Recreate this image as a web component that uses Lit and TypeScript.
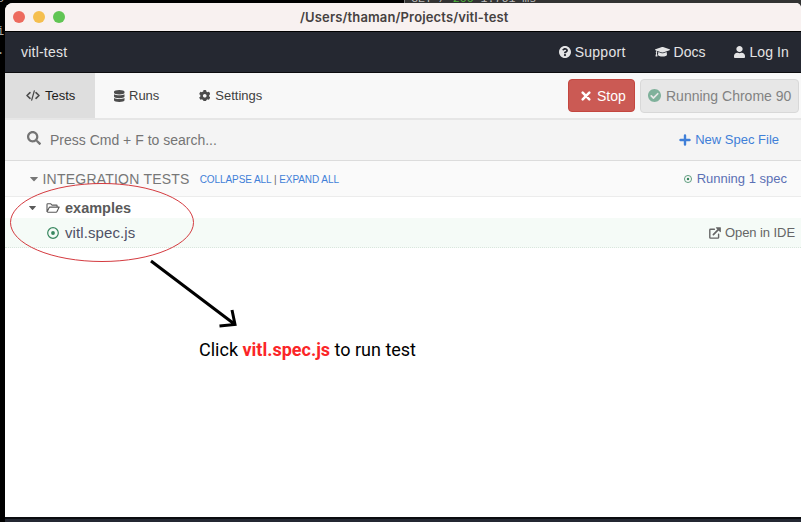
import { LitElement, html, svg, css } from "lit";
import { customElement } from "lit/decorators.js";

const glyphs: Record<string, { box: string; body: unknown }> = {
  help: {
    box: "8 8 496 496",
    body: svg`<path fill-rule="evenodd" d="M504 256c0 136.997-111.043 248-248 248S8 392.997 8 256C8 119.083 119.043 8 256 8s248 111.083 248 248zM262.655 90c-54.497 0-89.255 22.957-116.549 63.758-3.536 5.286-2.353 12.415 2.715 16.258l34.699 26.31c5.205 3.947 12.621 3.008 16.665-2.122 17.864-22.658 30.113-35.797 57.303-35.797 20.429 0 45.698 13.148 45.698 32.958 0 14.976-12.363 22.667-32.534 33.976C247.128 238.528 216 254.941 216 296v4c0 6.627 5.373 12 12 12h56c6.627 0 12-5.373 12-12v-1.333c0-28.462 83.186-29.647 83.186-106.667 0-58.002-60.165-102-116.531-102zM256 338c-25.365 0-46 20.635-46 46 0 25.364 20.635 46 46 46s46-20.636 46-46c0-25.365-20.635-46-46-46z"/>`,
  },
  cap: {
    box: "0 64 640 384",
    body: svg`<path d="M622.34 153.2L343.4 67.5c-15.2-4.67-31.6-4.67-46.79 0L17.66 153.2c-23.54 7.23-23.54 38.36 0 45.59l48.63 14.94c-10.67 13.19-17.23 29.28-17.88 46.9C38.78 266.15 32 276.11 32 288c0 10.78 5.68 19.85 13.86 25.65L20.33 428.53C18.11 438.52 25.71 448 35.94 448h56.11c10.24 0 17.84-9.48 15.62-19.47L82.14 313.65C90.32 307.85 96 298.78 96 288c0-11.57-6.47-21.25-15.66-26.87.76-15.02 8.44-28.3 20.69-36.72L296.6 284.5c9.06 2.78 26.44 6.25 46.79 0l278.95-85.7c23.55-7.24 23.55-38.36 0-45.6zM352.79 315.09c-28.53 8.76-52.84 3.92-65.59 0l-145.02-44.55L128 384c0 35.35 85.96 64 192 64s192-28.65 192-64l-14.18-113.47-145.03 44.56z"/>`,
  },
  user: {
    box: "0 0 448 512",
    body: svg`<path d="M224 256c70.7 0 128-57.3 128-128S294.7 0 224 0 96 57.3 96 128s57.3 128 128 128zm89.6 32h-16.7c-22.2 10.2-46.9 16-72.9 16s-50.6-5.8-72.9-16h-16.7C60.2 288 0 348.2 0 422.4V464c0 26.5 21.5 48 48 48h352c26.5 0 48-21.5 48-48v-41.6c0-74.2-60.2-134.4-134.4-134.4z"/>`,
  },
  code: {
    box: "0 0 14 11",
    body: svg`<path fill="none" stroke="currentColor" stroke-width="1.6" stroke-linecap="round" stroke-linejoin="round" d="M4 2.7L1 5.5l3 2.8M10 2.7l3 2.8-3 2.8"/><path fill="none" stroke="currentColor" stroke-width="1.3" stroke-linecap="round" d="M8.3 .8L5.7 10.2"/>`,
  },
  database: {
    box: "0 0 448 512",
    body: svg`<path d="M448 73.143v45.714C448 159.143 347.667 192 224 192S0 159.143 0 118.857V73.143C0 32.857 100.333 0 224 0s224 32.857 224 73.143zM448 176v102.857C448 319.143 347.667 352 224 352S0 319.143 0 278.857V176c48.125 33.143 136.208 48.572 224 48.572S399.874 209.143 448 176zm0 160v102.857C448 479.143 347.667 512 224 512S0 479.143 0 438.857V336c48.125 33.143 136.208 48.572 224 48.572S399.874 369.143 448 336z"/>`,
  },
  cog: {
    box: "8 8 496 496",
    body: svg`<path fill-rule="evenodd" d="M487.4 315.7l-42.6-24.6c4.3-23.2 4.3-47 0-70.2l42.6-24.6c4.9-2.8 7.1-8.6 5.5-14-11.1-35.6-30-67.8-54.7-94.6-3.8-4.1-10-5.1-14.8-2.3L380.8 110c-17.9-15.4-38.5-27.3-60.8-35.1V25.8c0-5.6-3.9-10.5-9.4-11.7-36.7-8.2-74.3-7.8-109.2 0-5.5 1.2-9.4 6.1-9.4 11.7V75c-22.2 7.9-42.8 19.8-60.8 35.1L88.7 85.5c-4.9-2.8-11-1.9-14.8 2.3-24.7 26.7-43.6 58.9-54.7 94.6-1.7 5.4.6 11.2 5.5 14L67.3 221c-4.3 23.2-4.3 47 0 70.2l-42.6 24.6c-4.9 2.8-7.1 8.6-5.5 14 11.1 35.6 30 67.8 54.7 94.6 3.8 4.1 10 5.1 14.8 2.3l42.6-24.6c17.9 15.4 38.5 27.3 60.8 35.1v49.2c0 5.6 3.9 10.5 9.4 11.7 36.7 8.2 74.3 7.8 109.2 0 5.5-1.2 9.4-6.1 9.4-11.7v-49.2c22.2-7.9 42.8-19.8 60.8-35.1l42.6 24.6c4.9 2.8 11 1.9 14.8-2.3 24.7-26.7 43.6-58.9 54.7-94.6 1.5-5.5-.7-11.3-5.6-14.1zM256 336c-44.1 0-80-35.9-80-80s35.9-80 80-80 80 35.9 80 80-35.9 80-80 80z"/>`,
  },
  cross: {
    box: "0 0 10 10",
    body: svg`<path fill="none" stroke="currentColor" stroke-width="2.5" stroke-linecap="round" d="M1.7 1.7l6.6 6.6M8.3 1.7L1.7 8.3"/>`,
  },
  check: {
    box: "8 8 496 496",
    body: svg`<path fill-rule="evenodd" d="M504 256c0 136.967-111.033 248-248 248S8 392.967 8 256 119.033 8 256 8s248 111.033 248 248zM227.314 387.314l184-184c6.248-6.248 6.248-16.379 0-22.627l-22.627-22.627c-6.248-6.249-16.379-6.249-22.628 0L216 308.118l-70.059-70.059c-6.248-6.248-16.379-6.248-22.628 0l-22.627 22.627c-6.248 6.248-6.248 16.379 0 22.627l104 104c6.249 6.249 16.379 6.249 22.628.001z"/>`,
  },
  search: {
    box: "0 0 512 512",
    body: svg`<path fill-rule="evenodd" d="M505 442.7L405.3 343c-4.5-4.5-10.6-7-17-7H372c27.6-35.3 44-79.7 44-128C416 93.1 322.9 0 208 0S0 93.1 0 208s93.1 208 208 208c48.3 0 92.7-16.4 128-44v16.3c0 6.4 2.5 12.5 7 17l99.7 99.7c9.4 9.4 24.6 9.4 33.9 0l28.3-28.3c9.4-9.4 9.4-24.6.1-34zM208 336c-70.7 0-128-57.2-128-128 0-70.7 57.2-128 128-128 70.7 0 128 57.2 128 128 0 70.7-57.2 128-128 128z"/>`,
  },
  plus: {
    box: "0 0 12 12",
    body: svg`<path fill="none" stroke="currentColor" stroke-width="2.4" stroke-linecap="round" d="M6 1.5v9M1.5 6h9"/>`,
  },
  dot: {
    box: "0 0 12 12",
    body: svg`<circle cx="6" cy="6" r="5.3" fill="none" stroke="currentColor" stroke-width="1.2"/><circle cx="6" cy="6" r="1.9"/>`,
  },
  caret: {
    box: "0 0 8 4.4",
    body: svg`<path d="M.5 0h7q.7.1.3.6L4.5 4.1q-.5.4-1 0L.2.6Q-.2.1.5 0z"/>`,
  },
  folder: {
    box: "0 0 14 10",
    body: svg`<path fill="none" stroke="currentColor" stroke-width="1.1" stroke-linejoin="round" d="M1 9V1.4Q1 .7 1.7.7H4.6L6 2.1h4.4q.7 0 .7.7v1.3M1 9L3.1 4.7q.3-.6.9-.6h9.2L11 8.6q-.3.6-.9.6H1.3"/>`,
  },
  external: {
    box: "0 0 12 12",
    body: svg`<path fill="none" stroke="currentColor" stroke-width="1.4" stroke-linecap="round" stroke-linejoin="round" d="M5.4 2.3H1.5q-.7 0-.7.7v7.4q0 .7.7.7h7.4q.7 0 .7-.7V7.3"/><path fill="none" stroke="currentColor" stroke-width="1.7" stroke-linecap="round" d="M4.4 7.6L9.8 2.2"/><path d="M7.3.2h4q.6 0 .6.6v4q-.2.7-.8.3L7 1.1Q6.6.4 7.3.2z"/>`,
  },
};

const icon = (name: string, w: number, h: number) => html`<svg
  class="icon" width=${w} height=${h} viewBox=${glyphs[name].box}
  preserveAspectRatio="none" fill="currentColor">${glyphs[name].body}</svg>`;

@customElement("app-root")
export class AppRoot extends LitElement {
  static styles = css`
    * { box-sizing: border-box; }
    :host {
      display: block; position: relative; width: 801px; height: 522px; overflow: hidden;
      background: #000; color: #525252; white-space: nowrap;
      font: 13px/20px "Liberation Sans", Arial, sans-serif;
    }
    .icon { display: block; flex: none; }
    .row, .item { display: flex; align-items: center; }
    .push { margin-left: auto; }
    .terminal {
      position: absolute; left: 404px; top: 0; right: 0; height: 12px; overflow: hidden;
      background: #333; border-left: 1px solid #777; padding-left: 6px;
      font: 11.6px/14px "Liberation Mono", monospace; color: #bbb;
    }
    .terminal p { margin: -8px 0 0; }
    .terminal b { color: #4fb53c; font-weight: normal; }
    .edge { position: absolute; left: -3px; font: 12px/14px "Liberation Mono", monospace; color: #aaa; }
    .e1 { top: -8px; } .e2 { top: 25px; } .e3 { top: 44px; }
    .window {
      position: relative; margin: 3px 0 0 5px; width: 796px; height: 514px;
      background: #fff; border-radius: 8px 5px 0 0; overflow: hidden;
      display: flex; flex-direction: column;
    }
    .titlebar { height: 28px; flex: none; background: #f8f1f0; padding-left: 8px; gap: 8px; }
    .light { width: 12px; height: 12px; border-radius: 50%; flex: none; }
    .red { background: #ed6a5e; } .yellow { background: #f5bf4f; } .green { background: #61c554; }
    .title { margin: -1px 0 0 227px; font: 600 13px/20px Inter, sans-serif; letter-spacing: .14px; color: #464141; }
    .nav {
      height: 42px; flex: none; background: #252831; color: #e4e4e5; font-size: 14px;
      border-top: 1px solid #000; border-bottom: 1px solid #0c0d10; padding: 0 12px 0 16px;
    }
    .nav .item { gap: 4px; }
    .project { letter-spacing: .22px; }
    .support { letter-spacing: .27px; }
    .docs { margin-left: 29px; } .login { margin-left: 29px; letter-spacing: .1px; }
    .tabs { height: 47px; flex: none; background: #f8f8f8; border-bottom: 2px solid #e6e6e6; padding-right: 2px; }
    .tab { height: 45px; color: #3f3f3f; gap: 5px; }
    .tests { width: 90px; background: #dedede; padding-left: 21px; color: #1d1d1d; }
    .tests .icon, .runs .icon, .settings .icon { color: #4c4c4c; }
    .runs { margin-left: 19px; gap: 4.5px; } .settings { margin-left: 39.5px; }
    .btn { height: 34px; border: 1px solid; border-radius: 4px; font-size: 14px; }
    .stop { width: 67px; height: 33px; background: #cb5a54; border-color: #c4463f; color: #fff; padding-left: 12px; gap: 6px; }
    .browser { width: 159px; margin-left: 5px; padding-left: 7px; gap: 5px; background: #e7e7e7; border-color: #d8d8d8; color: #828282; }
    .mint { color: #7fb19b; }
    .find { height: 41px; flex: none; background: #f4f4f4; border-bottom: 1px solid #dcdcdc; padding: 0 22px 1px; color: #747474; font-size: 14px; }
    .find > .icon { margin-top: -3px; }
    .find .hint { margin-left: 9px; }
    .link { color: #3f7fd8; font-size: 13px; gap: 4px; }
    .group { height: 36px; flex: none; background: #fafafa; border-bottom: 1px solid #ececec; padding: 0 14px 0 25px; color: #777; }
    .group > .icon { margin-top: 2px; }
    .group .name { margin-left: 4.5px; font-size: 14px; letter-spacing: .22px; }
    .toggles { margin: 2px 0 0 10px; font-size: 10px; letter-spacing: -.07px; color: #666; }
    .toggles a { color: #3f7fd8; }
    .running { color: #5b70b5; gap: 4.5px; }
    .leaf { color: #38875f; }
    .dir { height: 21px; flex: none; padding-left: 24px; color: #5a5a5a; }
    .dir .fold { margin-left: 9.500px; width: 14px; }
    .dir .name { margin-left: 5.5px; font-size: 14.5px; font-weight: 600; }
    .spec { height: 30px; flex: none; background: #f5fbf7; border-bottom: 1px dotted #d9e6dd; padding: 0 6px 0 41.5px; color: #4f5165; }
    .spec .name { margin-left: 6.5px; font-size: 15px; letter-spacing: .1px; }
    .open { color: #666; gap: 4px; letter-spacing: -.07px; }
    .footer { height: 5px; background: #242832; border-top: 2px solid #0b0c10; margin-left: 5px; }
    .marks { position: absolute; left: 0; top: 0; }
    .caption { position: absolute; left: 199px; top: 338px; font: 18px/24px Roboto, sans-serif; color: #000; }
    .caption b { color: #fb2527; font-weight: 700; }
  `;

  render() {
    return html`
      <div class="terminal"><p>GET / <b>200</b> 1.761 ms</p></div>
      <span class="edge e1">o</span><span class="edge e2">i</span><span class="edge e3">.</span>
      <main class="window">
        <header class="titlebar row">
          <i class="light red"></i><i class="light yellow"></i><i class="light green"></i>
          <span class="title">/Users/thaman/Projects/vitl-test</span>
        </header>
        <nav class="nav row">
          <span class="project">vitl-test</span>
          <span class="item support push">${icon("help", 12, 12)}<span>Support</span></span>
          <span class="item docs">${icon("cap", 15, 9.5)}<span>Docs</span></span>
          <span class="item login">${icon("user", 11, 12)}<span>Log In</span></span>
        </nav>
        <div class="tabs row">
          <span class="item tab tests">${icon("code", 14, 11)}<span>Tests</span></span>
          <span class="item tab runs">${icon("database", 10.5, 12)}<span>Runs</span></span>
          <span class="item tab settings">${icon("cog", 11.5, 11.5)}<span>Settings</span></span>
          <span class="item btn stop push">${icon("cross", 10, 10)}<span>Stop</span></span>
          <span class="item btn browser"><span class="mint">${icon("check", 13, 13)}</span><span>Running Chrome 90</span></span>
        </div>
        <div class="find row">
          ${icon("search", 14, 14)}<span class="hint">Press Cmd + F to search...</span>
          <span class="item link push">${icon("plus", 12, 12)}<span>New Spec File</span></span>
        </div>
        <div class="group row">
          ${icon("caret", 8, 4.4)}<span class="name">INTEGRATION TESTS</span>
          <span class="toggles"><a>COLLAPSE ALL</a> | <a>EXPAND ALL</a></span>
          <span class="item running push"><span class="leaf">${icon("dot", 8, 8)}</span><span>Running 1 spec</span></span>
        </div>
        <div class="dir row">
          ${icon("caret", 7, 4)}<span class="fold">${icon("folder", 14, 10)}</span><span class="name">examples</span>
        </div>
        <div class="spec row">
          <span class="leaf">${icon("dot", 12, 12)}</span><span class="name">vitl.spec.js</span>
          <span class="item open push">${icon("external", 12, 12)}<span>Open in IDE</span></span>
        </div>
      </main>
      <div class="footer"></div>
      <svg class="marks" width="801" height="522" fill="none">
        <ellipse cx="102" cy="222.500" rx="91.5" ry="39" stroke="#d43a3f" stroke-width="1"/>
        <path d="M151 261L235 324.5M232 310l3 14.500-15.500 1.500" stroke="#000" stroke-width="3"/>
      </svg>
      <div class="caption">Click <b>vitl.spec.js</b> to run test</div>
    `;
  }
}
